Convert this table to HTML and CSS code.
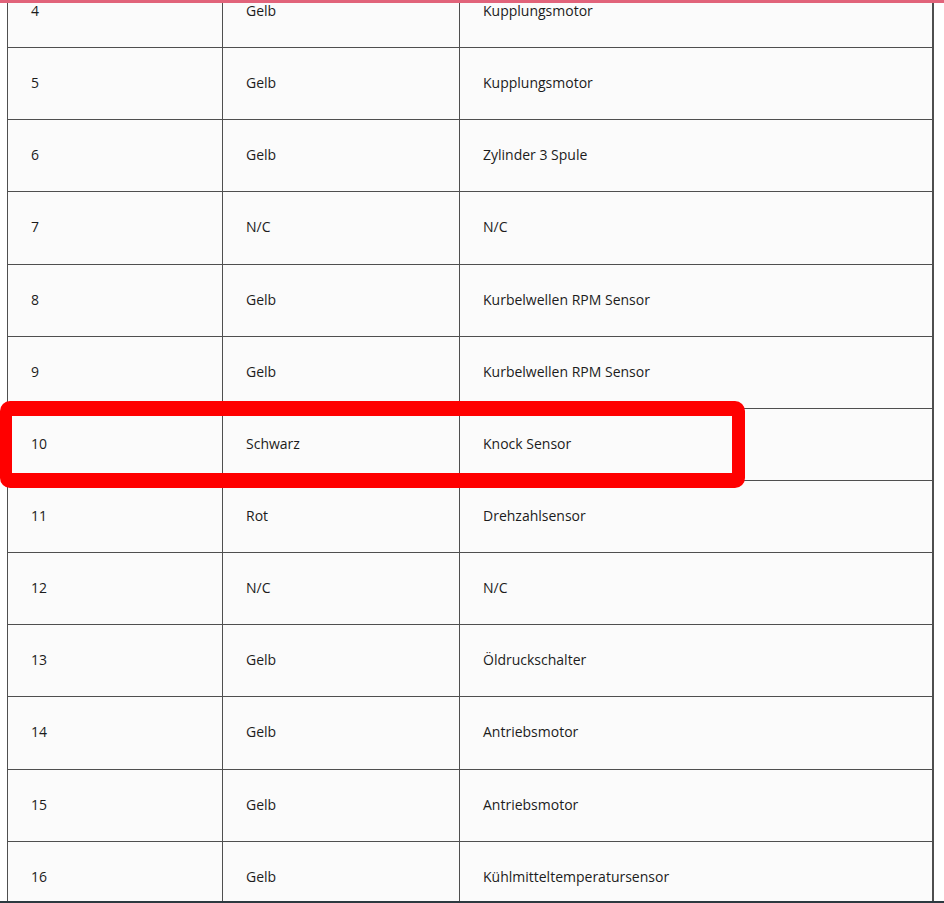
FILE: index.html
```html
<!DOCTYPE html>
<html lang="de">
<head>
<meta charset="utf-8">
<link rel="stylesheet" href="styles.css">
</head>
<body>
<div class="topbar"></div>
<div class="page">
  <table class="pins">
    <colgroup>
      <col class="c1"><col class="c2"><col class="c3">
    </colgroup>
    <tbody>
      <tr><td>4</td><td>Gelb</td><td>Kupplungsmotor</td></tr>
      <tr><td>5</td><td>Gelb</td><td>Kupplungsmotor</td></tr>
      <tr><td>6</td><td>Gelb</td><td>Zylinder 3 Spule</td></tr>
      <tr><td>7</td><td>N/C</td><td>N/C</td></tr>
      <tr><td>8</td><td>Gelb</td><td>Kurbelwellen RPM Sensor</td></tr>
      <tr><td>9</td><td>Gelb</td><td>Kurbelwellen RPM Sensor</td></tr>
      <tr><td>10</td><td>Schwarz</td><td>Knock Sensor</td></tr>
      <tr><td>11</td><td>Rot</td><td>Drehzahlsensor</td></tr>
      <tr><td>12</td><td>N/C</td><td>N/C</td></tr>
      <tr><td>13</td><td>Gelb</td><td>Öldruckschalter</td></tr>
      <tr><td>14</td><td>Gelb</td><td>Antriebsmotor</td></tr>
      <tr><td>15</td><td>Gelb</td><td>Antriebsmotor</td></tr>
      <tr><td>16</td><td>Gelb</td><td>Kühlmitteltemperatursensor</td></tr>
    </tbody>
  </table>
  <div class="highlight"></div>
</div>
<div class="bottombar"></div>
</body>
</html>
```
FILE: styles.css
```css
html, body {
  margin: 0;
  padding: 0;
  background: #ffffff;
  overflow: hidden;
}
body {
  font-family: "Open Sans", "Noto Sans", sans-serif;
  font-size: 14px;
  color: #1c1c1c;
}
.topbar {
  position: fixed;
  top: 0;
  left: 0;
  right: 0;
  height: 3px;
  background: #e1637a;
  z-index: 5;
}
.bottombar {
  position: fixed;
  bottom: 0;
  left: 0;
  right: 0;
  height: 2px;
  background: #2c3a40;
  z-index: 5;
}
.page {
  position: relative;
  padding-left: 7px;
  margin-top: -25px;
}
.pins {
  border-collapse: collapse;
  table-layout: fixed;
  width: 925px;
  background: #fbfbfb;
}
.c1 { width: 215px; }
.c2 { width: 237px; }
.c3 { width: 473px; }
.pins td {
  border: 1px solid #4f4f4f;
  height: 72.15px;
  padding: 0 0 1px 23px;
  vertical-align: middle;
  line-height: 20px;
  box-sizing: border-box;
}
.pins tr td:last-child {
  border-right-width: 2px;
}
.highlight {
  position: absolute;
  left: 0;
  top: 426px;
  width: 745px;
  height: 87px;
  box-sizing: border-box;
  border-style: solid;
  border-color: #ff0000;
  border-width: 15px 13px 15px 12px;
  border-radius: 10px;
}
```
